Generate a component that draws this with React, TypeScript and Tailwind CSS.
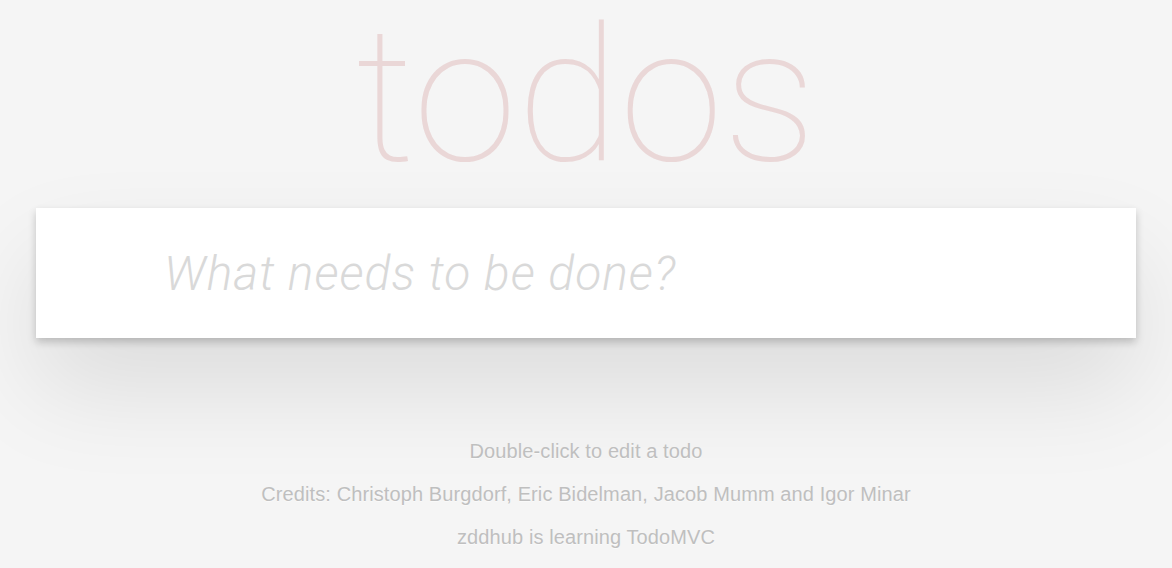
import React, { useState } from 'react';

export default function App() {
  const [value, setValue] = useState('');

  return (
    <div className="min-h-screen w-full bg-[#f5f5f5] font-['Roboto','Helvetica_Neue',Helvetica,Arial,sans-serif]">
      <div className="mx-auto w-[1100px]">
        {/* Заголовок */}
        <h1 className="h-[208px] text-center text-[188px] leading-[192px] font-thin text-[rgba(175,47,47,0.15)]">
          todos
        </h1>

        {/* Поле ввода */}
        <section className="bg-white shadow-[0_4px_8px_rgba(0,0,0,0.2),0_50px_100px_rgba(0,0,0,0.1)]">
          <input
            type="text"
            value={value}
            onChange={(e) => setValue(e.target.value)}
            placeholder="What needs to be done?"
            className="block h-[130px] w-full bg-transparent pl-[128px] pr-8 text-[48px] font-light tracking-[1px] text-[#4d4d4d] outline-none placeholder:italic placeholder:font-light placeholder:text-[#d9d9d9]"
          />
        </section>

        {/* Подвал */}
        <footer className="mt-[102px] flex flex-col items-center gap-[20px] font-['Liberation_Sans',Arial,sans-serif] text-[20px] leading-[23px] tracking-[0.1px] text-[#bfbfbf] [text-shadow:0_1px_0_rgba(255,255,255,0.5)]">
          <p>Double-click to edit a todo</p>
          <p>Credits: Christoph Burgdorf, Eric Bidelman, Jacob Mumm and Igor Minar</p>
          <p>zddhub is learning TodoMVC</p>
        </footer>
      </div>
    </div>
  );
}
